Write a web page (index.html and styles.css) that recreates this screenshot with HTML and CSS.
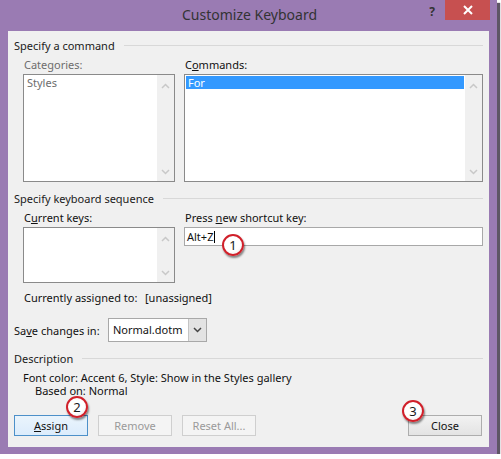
FILE: index.html
```html
<!DOCTYPE html>
<html>
<head>
<meta charset="utf-8">
<link rel="stylesheet" href="styles.css">
</head>
<body>
<div class="window">
  <div class="titlebar">
    <div></div>
    <div class="title">Customize Keyboard</div>
    <div class="controls">
      <span class="help">?</span>
      <span class="close-x"><svg width="10" height="10" viewBox="0 0 10 10"><path d="M1 1L9 9M9 1L1 9" stroke="#fff" stroke-width="2"/></svg></span>
    </div>
  </div>
  <div class="client">
    <div class="group-head"><span>Specify a command</span></div>
    <div class="grid">
      <div class="col">
        <div class="label disabled">Categories:</div>
        <div class="listbox tall">
          <div class="items"><div class="item disabled">Styles</div></div>
          <div class="scroll">
            <svg width="9" height="6" viewBox="0 0 9 6"><path d="M1 5L4.5 1.5L8 5" fill="none" stroke="#c8c8c8" stroke-width="1.5"/></svg>
            <svg width="9" height="6" viewBox="0 0 9 6"><path d="M1 1L4.5 4.5L8 1" fill="none" stroke="#c8c8c8" stroke-width="1.5"/></svg>
          </div>
        </div>
      </div>
      <div class="col">
        <div class="label">C<u>o</u>mmands:</div>
        <div class="listbox tall">
          <div class="items"><div class="item selected">For</div></div>
          <div class="scroll">
            <svg width="9" height="6" viewBox="0 0 9 6"><path d="M1 5L4.5 1.5L8 5" fill="none" stroke="#c8c8c8" stroke-width="1.5"/></svg>
            <svg width="9" height="6" viewBox="0 0 9 6"><path d="M1 1L4.5 4.5L8 1" fill="none" stroke="#c8c8c8" stroke-width="1.5"/></svg>
          </div>
        </div>
      </div>
    </div>
    <div class="group-head second"><span>Specify keyboard sequence</span></div>
    <div class="grid">
      <div class="col">
        <div class="label">C<u>u</u>rrent keys:</div>
        <div class="listbox short">
          <div class="items"></div>
          <div class="scroll">
            <svg width="9" height="6" viewBox="0 0 9 6"><path d="M1 5L4.5 1.5L8 5" fill="none" stroke="#c8c8c8" stroke-width="1.5"/></svg>
            <svg width="9" height="6" viewBox="0 0 9 6"><path d="M1 1L4.5 4.5L8 1" fill="none" stroke="#c8c8c8" stroke-width="1.5"/></svg>
          </div>
        </div>
      </div>
      <div class="col">
        <div class="label">Press <u>n</u>ew shortcut key:</div>
        <div class="textbox"><span>Alt+Z</span><span class="caret"></span></div>
      </div>
    </div>
    <div class="assigned"><span class="assigned-label">Currently assigned to:</span><span>[unassigned]</span></div>
    <div class="save-row">
      <span class="save-label">Sa<u>v</u>e changes in:</span>
      <div class="combo">
        <span class="combo-text">Normal.dotm</span>
        <span class="combo-btn"><svg width="9" height="6" viewBox="0 0 9 6"><path d="M1 1L4.5 4.5L8 1" fill="none" stroke="#444" stroke-width="1.5"/></svg></span>
      </div>
    </div>
    <div class="group-head third"><span>Description</span></div>
    <div class="desc">
      <div>Font color: Accent 6, Style: Show in the Styles gallery</div>
      <div class="desc-indent">Based on: Normal</div>
    </div>
    <div class="buttons">
      <button class="btn default"><u>A</u>ssign</button>
      <button class="btn off">Remove</button>
      <button class="btn off">Reset All...</button>
      <button class="btn close">Close</button>
    </div>
    <span class="badge b1">1</span>
    <span class="badge b2">2</span>
    <span class="badge b3">3</span>
  </div>
</div>
</body>
</html>
```

FILE: styles.css
```css
html, body {
  margin: 0;
  padding: 0;
  background: #ffffff;
}
body {
  font-family: "Noto Sans", "DejaVu Sans", sans-serif;
  font-size: 11px;
  color: #111;
}
.window {
  width: 497px;
  height: 454px;
  box-sizing: border-box;
  background: #9a7bb3;
  padding: 0 8px 7px 8px;
  box-shadow: 3px 3px 1px rgba(40, 30, 50, 0.75);
}
.titlebar {
  height: 31px;
  margin: 0 -8px;
  display: grid;
  grid-template-columns: 1fr auto 1fr;
}
.title {
  font-size: 14px;
  color: #333;
  line-height: 30px;
  padding-left: 2px;
}
.controls {
  display: flex;
  justify-content: flex-end;
  align-items: flex-start;
  padding-right: 7px;
}
.help {
  font-weight: bold;
  font-size: 12px;
  color: #333;
  line-height: 12px;
  margin-top: 6px;
  margin-right: 10px;
}
.close-x {
  width: 45px;
  height: 20px;
  background: #c75050;
  display: flex;
  align-items: center;
  justify-content: center;
}
.client {
  position: relative;
  background: #f0f0f0;
  height: 416px;
  box-sizing: border-box;
  padding: 6px 6px 0 6px;
}
.group-head {
  display: flex;
  align-items: center;
  height: 16px;
  color: #1a1a1a;
}
.group-head::after {
  content: "";
  flex: 1;
  height: 1px;
  background: #d8d8d8;
  margin-left: 9px;
}
.group-head.second { margin-top: 8px; }
.group-head.third { margin-top: 8px; }
.grid {
  display: grid;
  grid-template-columns: 152px 299px;
  column-gap: 9px;
  margin-left: 9px;
}
.label {
  height: 16px;
  line-height: 16px;
  margin-top: 4px;
  margin-bottom: 1px;
  padding-left: 1px;
}
.disabled { color: #6d6d6d; }
.listbox {
  display: flex;
  border: 1px solid #8a8a8a;
  background: #fff;
  box-sizing: border-box;
}
.listbox.tall { height: 108px; }
.listbox.short { height: 56px; }
.items {
  flex: 1;
  padding: 1px;
}
.item {
  height: 13px;
  line-height: 13px;
  padding-left: 2px;
}
.item.selected {
  background: #3399ff;
  color: #fff;
}
.scroll {
  width: 17px;
  background: #f0f0f0;
  display: flex;
  flex-direction: column;
  justify-content: space-between;
  align-items: center;
  padding: 8px 0 6px 0;
}
.textbox {
  height: 19px;
  box-sizing: border-box;
  border: 1px solid #a8a8a8;
  background: #fff;
  display: flex;
  align-items: center;
  padding-left: 2px;
}
.caret {
  display: inline-block;
  width: 1px;
  height: 12px;
  background: #000;
  margin-left: 1px;
}
.assigned {
  margin-top: 7px;
  margin-left: 10px;
  height: 16px;
  line-height: 16px;
  display: flex;
}
.assigned-label { width: 121px; }
.save-row {
  margin-top: 12px;
  display: flex;
  align-items: center;
}
.save-label { width: 94px; }
.combo {
  width: 99px;
  height: 24px;
  box-sizing: border-box;
  border: 1px solid #a8a8a8;
  background: #fff;
  display: flex;
}
.combo-text {
  flex: 1;
  line-height: 22px;
  padding-left: 4px;
}
.combo-btn {
  width: 17px;
  background: #e3e3e3;
  border-left: 1px solid #c4c4c4;
  display: flex;
  align-items: center;
  justify-content: center;
}
.desc {
  margin-top: 5px;
  margin-left: 9px;
  line-height: 13px;
}
.desc-indent { padding-left: 12px; }
.buttons {
  display: flex;
  margin-top: 18px;
}
.btn {
  font-family: "Noto Sans", "DejaVu Sans", sans-serif;
  font-size: 11px;
  width: 74px;
  height: 21px;
  box-sizing: border-box;
  padding: 0;
  border: 1px solid #adadad;
  background: linear-gradient(#f2f2f2, #e3e3e3);
  color: #111;
  margin-right: 10px;
}
.btn.default {
  border-color: #4d90c9;
  background: linear-gradient(#eaf4fc, #dcecfc);
}
.btn.off {
  border-color: #cfcfcf;
  background: #f4f4f4;
  color: #9a9a9a;
}
.btn.close {
  margin-left: auto;
  margin-right: 1px;
}
.badge {
  position: absolute;
  width: 18px;
  height: 18px;
  border-radius: 50%;
  border: 2px solid #d0202a;
  background: radial-gradient(circle at 40% 35%, #ffffff 55%, #e6e6e6 100%);
  box-shadow: 1px 2px 2px rgba(0, 0, 0, 0.45);
  font-size: 13px;
  line-height: 18px;
  text-align: center;
  color: #1a1a1a;
}
.b1 { left: 214px; top: 203px; }
.b2 { left: 58px; top: 365px; }
.b3 { left: 394px; top: 369px; }
```
